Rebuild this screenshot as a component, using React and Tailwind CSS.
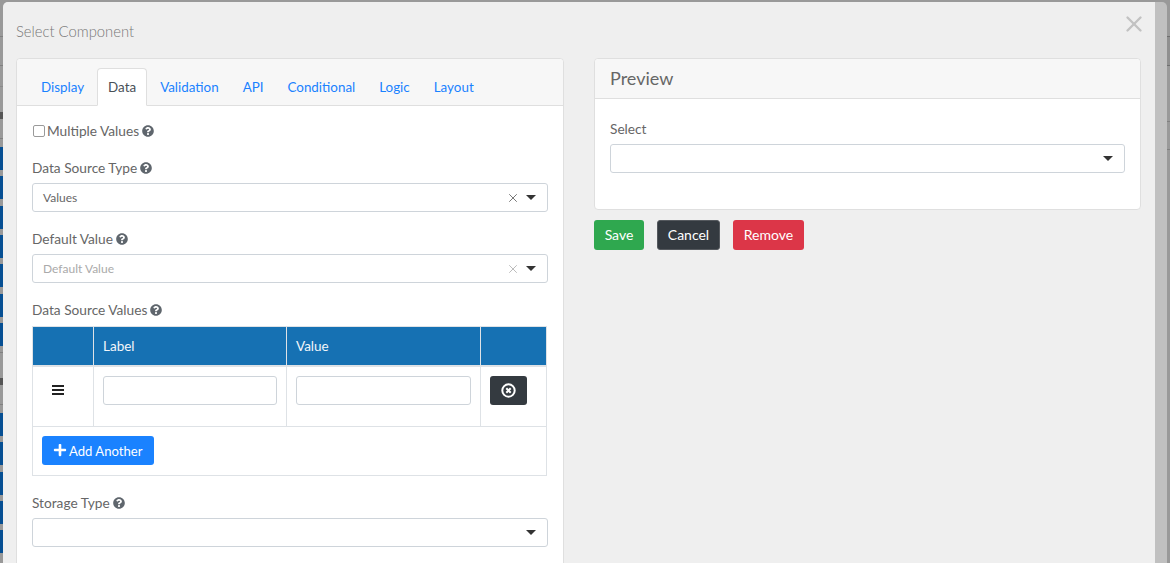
import React from "react";
import { FaQuestionCircle, FaPlus } from "react-icons/fa";
import { X } from "lucide-react";

const tabs = ["Display", "Data", "Validation", "API", "Conditional", "Logic", "Layout"];

function Help() {
  return <FaQuestionCircle size={12} className="text-[#5f666d] ml-[3px] shrink-0" />;
}

function Field({ label, className }) {
  return (
    <div className={`flex items-center h-[20px] text-[13.7px] text-[#666] ${className}`}>
      {label}
      <Help />
    </div>
  );
}

function SelectBox({ text, muted, clear, className }) {
  return (
    <div className={`flex items-center h-[29px] border border-[#ced4da] rounded-[3px] bg-white pl-[10px] pr-[11px] text-[12px] ${className}`}>
      <span className={muted ? "text-[#aaa]" : "text-[#666]"}>{text}</span>
      <div className="ml-auto flex items-center">
        {clear && <X size={14} strokeWidth={1.7} className={muted ? "text-[#bbb] mr-[6px]" : "text-[#777] mr-[6px]"} />}
        <span className="w-0 h-0 border-x-[5.5px] border-x-transparent border-t-[5.5px] border-t-[#333]" />
      </div>
    </div>
  );
}

// slivers of the page behind the modal
function LeftSliver() {
  return (
    <div className="w-[3px] shrink-0 flex flex-col">
      <div className="h-[1px] mt-[36px] bg-[#808080]" />
      <div className="h-[1px] mt-[28px] bg-[#808080]" />
      <div className="h-[1px] mt-[20px] bg-[#8a8a8a]" />
      <div className="h-[7px] mt-[25px] bg-[#555]" />
      <div className="h-[1px] mt-[19px] bg-[#808080]" />
      <div className="flex flex-col gap-[6.33px] mt-[8px]">
        <div className="h-[23px] bg-[#064f93]" />
        <div className="h-[23px] bg-[#064f93]" />
        <div className="h-[23px] bg-[#064f93]" />
        <div className="h-[23px] bg-[#064f93]" />
        <div className="h-[23px] bg-[#064f93]" />
        <div className="h-[23px] bg-[#064f93]" />
        <div className="h-[23px] bg-[#064f93]" />
      </div>
      <div className="h-[1px] mt-[6px] bg-[#808080]" />
      <div className="h-[7px] mt-[25px] bg-[#555]" />
      <div className="h-[1px] mt-[19px] bg-[#808080]" />
      <div className="flex flex-col gap-[6.33px] mt-[8px]">
        <div className="h-[23px] bg-[#064f93]" />
        <div className="h-[23px] bg-[#064f93]" />
        <div className="h-[23px] bg-[#064f93]" />
        <div className="h-[23px] bg-[#064f93]" />
        <div className="h-[23px] bg-[#064f93]" />
      </div>
    </div>
  );
}

function RightSliver() {
  return (
    <div className="w-[3px] shrink-0 flex flex-col">
      <div className="h-[1px] mt-[36px] bg-[#6f6f6f]" />
      <div className="h-[28px] bg-[#8f8f8f]" />
      <div className="h-[1px] bg-[#6f6f6f]" />
      <div className="h-[1px] mt-[55px] bg-[#808080]" />
      <div className="h-[1px] mt-[27px] bg-[#808080]" />
    </div>
  );
}

function LeftCard() {
  return (
    <div className="w-[548px] shrink-0 bg-white border border-[#dfdfdf] rounded-t-[4px] h-[600px]">
      <div className="flex items-end h-[47px] bg-[#f7f7f7] border-b border-[#dfdfdf] pl-[12px] rounded-t-[4px]">
        {tabs.map((t) =>
          t === "Data" ? (
            <div key={t} className="w-[50px] h-[38px] -mb-[1px] mx-[1px] pt-[1px] flex items-center justify-center bg-white border border-[#dfdfdf] border-b-white rounded-t-[4px] text-[13.4px] text-[#495057]">
              {t}
            </div>
          ) : (
            <div key={t} className="h-[38px] px-[12px] pt-[2px] flex items-center text-[13.4px] text-[#1a82ff]">
              {t}
            </div>
          )
        )}
      </div>

      <div className="pl-[15px] pr-[15px]">
        <div className="flex items-center h-[20px] mt-[15px] text-[13.7px] text-[#666]">
          <span className="w-[12px] h-[12px] ml-[1px] mr-[2px] border border-[#9a9a9a] rounded-[2px] bg-white" />
          Multiple Values
          <Help />
        </div>

        <Field label="Data Source Type" className="mt-[17px]" />
        <SelectBox text="Values" clear className="mt-[5px]" />

        <Field label="Default Value" className="mt-[17px]" />
        <SelectBox text="Default Value" muted clear className="mt-[5px]" />

        <Field label="Data Source Values" className="mt-[17px]" />
        <div className="mt-[6px] w-[515px] border border-[#dee2e6] text-[13.5px]">
          <div className="flex h-[38px] bg-[#1671b3] text-[#f2f6fa]">
            <div className="w-[61px] border-r border-[#dee2e6]" />
            <div className="w-[193px] border-r border-[#dee2e6] px-[9px] flex items-center">Label</div>
            <div className="w-[194px] border-r border-[#dee2e6] px-[9px] flex items-center">Value</div>
            <div className="flex-1" />
          </div>
          <div className="flex h-[62px] border-t-2 border-[#dee2e6] border-b border-b-[#dee2e6]">
            <div className="w-[61px] border-r border-[#dee2e6] pl-[19px] pt-[18px]">
              <svg width="12" height="10" viewBox="0 0 12 10" fill="#222">
                <rect x="0" y="0" width="12" height="2" />
                <rect x="0" y="4" width="12" height="2" />
                <rect x="0" y="8" width="12" height="2" />
              </svg>
            </div>
            <div className="w-[193px] border-r border-[#dee2e6] pl-[9px] pt-[9px]">
              <div className="w-[174px] h-[29px] border border-[#ced4da] rounded-[3px]" />
            </div>
            <div className="w-[194px] border-r border-[#dee2e6] pl-[9px] pt-[9px]">
              <div className="w-[175px] h-[29px] border border-[#ced4da] rounded-[3px]" />
            </div>
            <div className="flex-1 pl-[9px] pt-[9px]">
              <div className="w-[37px] h-[29px] bg-[#343a40] rounded-[3px] flex items-center justify-center pb-[1px]">
                <svg width="15" height="15" viewBox="0 0 15 15" fill="none" stroke="white">
                  <circle cx="7.5" cy="7.5" r="6.2" strokeWidth="2" />
                  <path d="M5.3 5.3 L9.7 9.7 M9.7 5.3 L5.3 9.7" strokeWidth="2" />
                </svg>
              </div>
            </div>
          </div>
          <div className="h-[48px] pl-[9px] pt-[9px]">
            <div className="w-[112px] h-[29px] bg-[#1a82ff] rounded-[3px] flex items-center pl-[11px] pt-[3px] text-[13.1px] text-white">
              <FaPlus size={14} className="mr-[2px] -mt-[5px]" />
              Add Another
            </div>
          </div>
        </div>

        <Field label="Storage Type" className="mt-[17px]" />
        <SelectBox className="mt-[5px]" />
      </div>
    </div>
  );
}

function RightColumn() {
  return (
    <div className="w-[547px] shrink-0">
      <div className="h-[152px] bg-white border border-[#dfdfdf] rounded-[4px]">
        <div className="h-[40px] bg-[#f7f7f7] border-b border-[#dfdfdf] rounded-t-[4px] pl-[15px] flex items-center text-[18px] text-[#666]">
          Preview
        </div>
        <div className="px-[15px] pt-[20px]">
          <div className="h-[20px] flex items-center text-[13.7px] text-[#666]">Select</div>
          <SelectBox className="mt-[5px]" />
        </div>
      </div>
      <div className="flex mt-[10px] text-[14px] text-white">
        <div className="w-[50px] h-[30px] pb-[2px] mr-[13px] bg-[#2fa84f] rounded-[3px] flex items-center justify-center">Save</div>
        <div className="w-[63px] h-[30px] pb-[2px] mr-[13px] bg-[#343a40] border border-[#55595e] rounded-[3px] flex items-center justify-center">Cancel</div>
        <div className="w-[71px] h-[30px] pb-[2px] bg-[#dc3648] rounded-[3px] flex items-center justify-center">Remove</div>
      </div>
    </div>
  );
}

export default function App() {
  return (
    <div className="h-[563px] w-[1170px] overflow-hidden flex bg-[#999999] font-['Lato','Open_Sans',sans-serif]">
      <LeftSliver />
      <div className="w-[1164px] mt-[2px] flex bg-[#c0c0c0] rounded-t-[5px] overflow-hidden">
        <div className="w-[1152px] bg-[#efefef] pl-[13px]">
          <div className="flex h-[56px] items-start pr-[8px]">
            <span className="mt-[19px] text-[14.8px] leading-[20px] font-light text-[#777]">Select Component</span>
            <X size={26} strokeWidth={2.2} className="ml-auto mt-[9px] text-[#c2c2c2]" />
          </div>
          <div className="flex gap-[30px]">
            <LeftCard />
            <RightColumn />
          </div>
        </div>
      </div>
      <RightSliver />
    </div>
  );
}
